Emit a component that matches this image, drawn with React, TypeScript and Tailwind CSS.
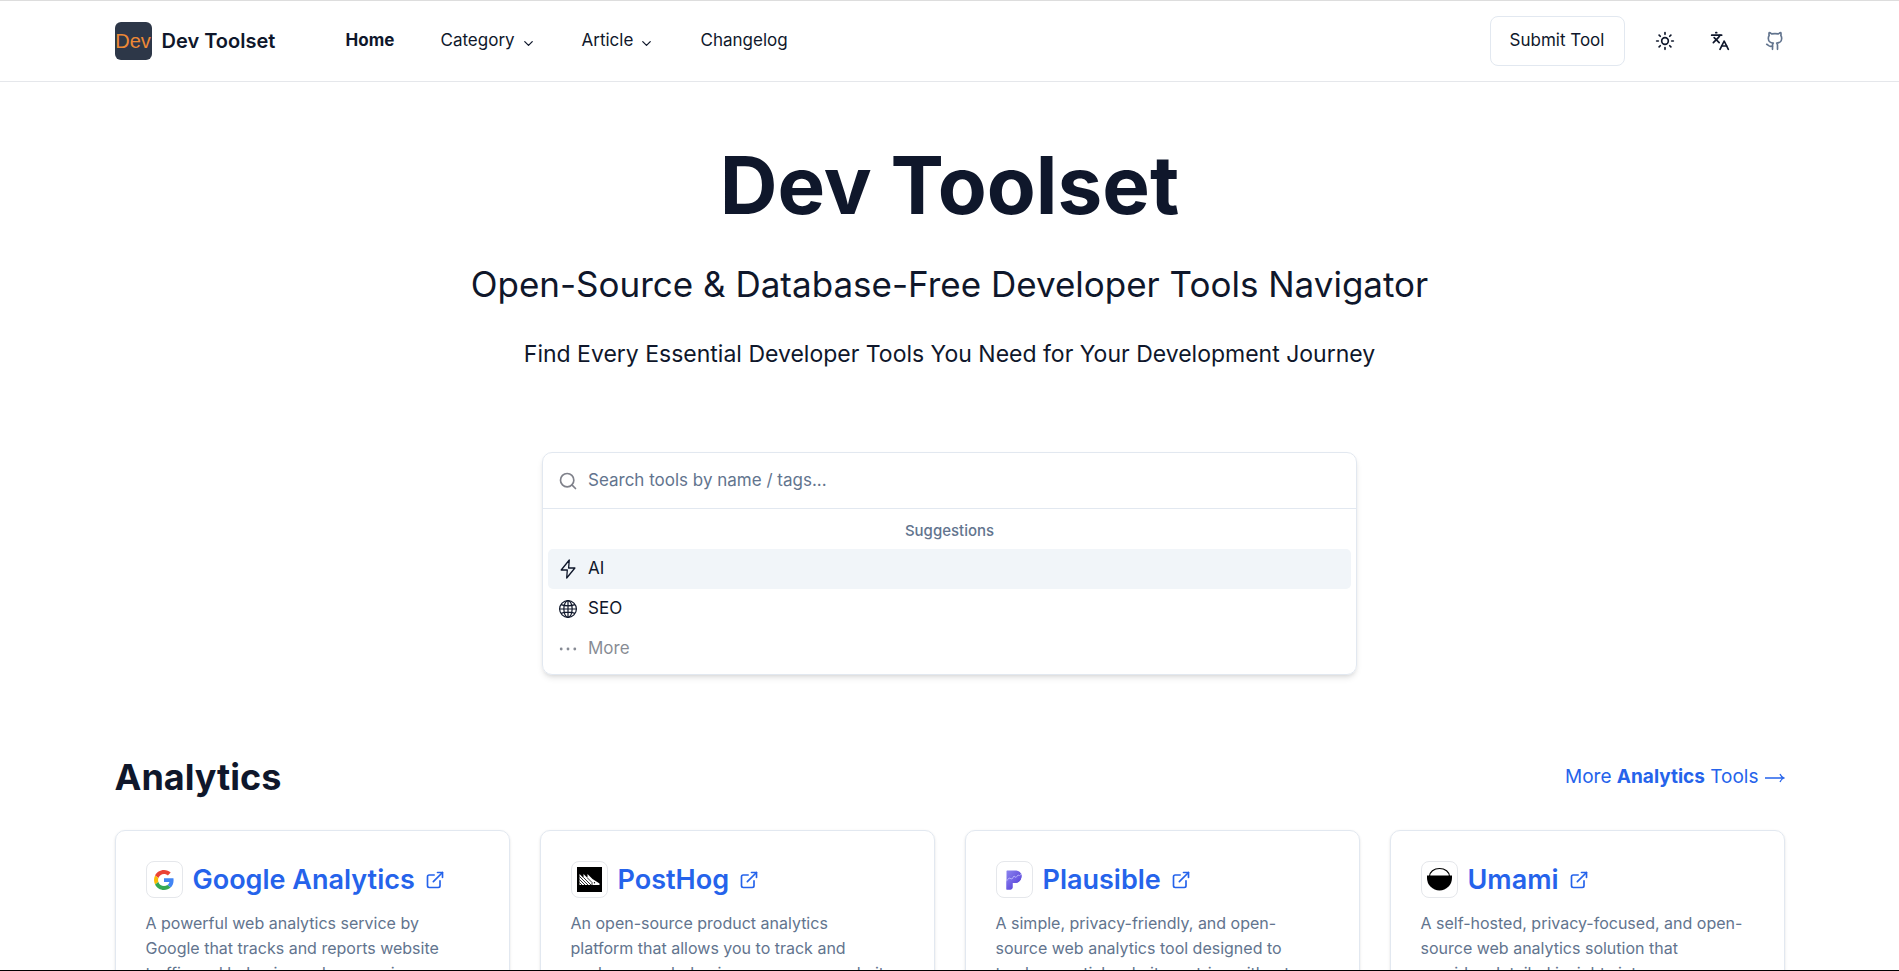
import type { ReactNode } from "react";
import { ChevronDown, ExternalLink, Github, Languages, Search, Sun } from "lucide-react";

const GoogleLogo = () => (
  <svg viewBox="0 0 48 48" className="size-5">
    <path fill="#EA4335" d="M24 9.5c3.54 0 6.71 1.22 9.21 3.6l6.85-6.85C35.9 2.38 30.47 0 24 0 14.62 0 6.51 5.38 2.56 13.22l7.98 6.19C12.43 13.72 17.74 9.5 24 9.5z" />
    <path fill="#4285F4" d="M46.98 24.55c0-1.57-.15-3.09-.38-4.55H24v9.02h12.94c-.58 2.96-2.26 5.48-4.78 7.18l7.73 6c4.51-4.18 7.09-10.36 7.09-17.65z" />
    <path fill="#FBBC05" d="M10.53 28.59c-.48-1.45-.76-2.99-.76-4.59s.27-3.14.76-4.59l-7.98-6.19C.92 16.46 0 20.12 0 24c0 3.88.92 7.54 2.56 10.78l7.97-6.19z" />
    <path fill="#34A853" d="M24 48c6.48 0 11.93-2.13 15.89-5.81l-7.73-6c-2.15 1.45-4.92 2.3-8.16 2.3-6.26 0-11.57-4.22-13.47-9.91l-7.98 6.19C6.51 42.62 14.62 48 24 48z" />
  </svg>
);

const PostHogLogo = () => (
  <svg viewBox="0 0 25 25" className="size-[25px]">
    <rect width="25" height="25" fill="#000" />
    <path fill="#fff" d="M2.500 7 6.500 11V7L10.500 11V7L15.500 12 22.500 16.500V18H2.500z" />
    <path fill="none" stroke="#000" strokeWidth="0.8" d="M2.500 9.500 11 18M2.500 12.500 8 18M2.500 15.500 5 18M6.500 10.500 14 18M10.500 11 15 15.500V18" />
    <circle cx="17.500" cy="15.800" r="0.700" fill="#000" />
  </svg>
);

const PlausibleLogo = () => (
  <svg viewBox="0 0 16 20" className="h-5 w-4">
    <defs>
      <linearGradient id="plausible-top" x1="0" y1="0" x2="1" y2="1">
        <stop offset="0" stopColor="#8b84f0" />
        <stop offset="1" stopColor="#4f36d0" />
      </linearGradient>
      <linearGradient id="plausible-stem" x1="0" y1="0" x2="1" y2="1">
        <stop offset="0" stopColor="#8d83f3" />
        <stop offset="1" stopColor="#4a33d1" />
      </linearGradient>
    </defs>
    <path fill="url(#plausible-top)" d="M1 0.500h9a5.500 5.500 0 0 1 5.500 5.500c0 4-2.500 7-6.500 7H6.500v4.500a2 2 0 0 1-2 2H.5V1z" />
    <path fill="url(#plausible-stem)" d="M.5 11.500 3 8.500l3 1 2-3 2 1.500 2-2.500 1.500.5 2-1.500c.5 5-2.500 8.500-6.500 8.500H6.500v4.500a2 2 0 0 1-2 2H.5z" />
    <path fill="none" stroke="#b9b4fa" strokeWidth="0.9" d="m.5 11 2.500-3 3 1 2-3 2 1.500 2-2.500 1.500.5 2-1.500" />
  </svg>
);

const UmamiLogo = () => (
  <svg viewBox="0 0 25 25" className="size-[25px]">
    <path d="M2.500 9.500a10 8 0 0 1 20 0" fill="none" stroke="#000" strokeWidth="1.200" />
    <path d="M0 8.500h25v2.500a12.500 12.500 0 0 1-25 0z" fill="#000" />
  </svg>
);

const LightningIcon = () => (
  <svg viewBox="0 0 20 20" fill="none" stroke="currentColor" strokeWidth="1.300" strokeLinejoin="round" className="size-5">
    <path d="M11.300 1 10.600 9h6.300L8.700 19l.6-8H3.200z" />
  </svg>
);

const GlobeIcon = () => (
  <svg viewBox="0 0 15 15" fill="none" stroke="currentColor" strokeWidth="0.9" className="size-5">
    <circle cx="7.500" cy="7.500" r="6.300" />
    <ellipse cx="7.500" cy="7.500" rx="3.100" ry="6.300" />
    <path d="M7.500 1.200v12.600M1.200 7.500h12.600M2.200 4.200c3.300 1.100 7.300 1.100 10.600 0M2.200 10.800c3.300-1.100 7.300-1.100 10.600 0" />
  </svg>
);

const DotsIcon = () => (
  <svg viewBox="0 0 20 20" fill="currentColor" className="size-5">
    <circle cx="3.200" cy="10" r="1.400" />
    <circle cx="10" cy="10" r="1.400" />
    <circle cx="16.800" cy="10" r="1.400" />
  </svg>
);

const LongArrow = () => (
  <svg viewBox="0 0 20 10" fill="none" stroke="currentColor" strokeWidth="1.300" className="h-[10px] w-5">
    <path d="M0 5h19M15 1c.8 2 2 3.300 4 4-2 .7-3.200 2-4 4" />
  </svg>
);

const tools: { name: string; logo: ReactNode; description: string[] }[] = [
  {
    name: "Google Analytics",
    logo: <GoogleLogo />,
    description: [
      "A powerful web analytics service by",
      "Google that tracks and reports website",
      "traffic and behavior and conversions.",
    ],
  },
  {
    name: "PostHog",
    logo: <PostHogLogo />,
    description: [
      "An open-source product analytics",
      "platform that allows you to track and",
      "analyze user behavior across your website.",
    ],
  },
  {
    name: "Plausible",
    logo: <PlausibleLogo />,
    description: [
      "A simple, privacy-friendly, and open-",
      "source web analytics tool designed to",
      "track essential website metrics without",
    ],
  },
  {
    name: "Umami",
    logo: <UmamiLogo />,
    description: [
      "A self-hosted, privacy-focused, and open-",
      "source web analytics solution that",
      "provides detailed insights into",
    ],
  },
];

function Header() {
  return (
    <header className="border-b border-gray-200">
      <div className="mx-auto flex h-20 max-w-[1670px] items-center justify-between">
        <div className="flex items-center">
          <a href="#" className="flex items-center gap-[10px]">
            <span className="flex h-[38px] w-[37px] items-center justify-center overflow-hidden rounded-md bg-[#2d3748] font-['Liberation_Sans',sans-serif] text-[20px] leading-5 text-[#ed8936]">
              Dev
            </span>
            <span className="w-[114px] text-[20px] font-semibold whitespace-nowrap">Dev Toolset</span>
          </a>
          <nav className="ml-[70px] flex items-center text-[17px]">
            <a href="#" className="w-[95px] font-bold">Home</a>
            <button className="flex w-[141px] items-center gap-[6px]">
              Category <ChevronDown className="mt-1 size-[15px]" />
            </button>
            <button className="flex w-[119px] items-center gap-[6px]">
              Article <ChevronDown className="mt-1 size-[15px]" />
            </button>
            <a href="#">Changelog</a>
          </nav>
        </div>
        <div className="flex items-center">
          <button className="h-[50px] w-[135px] rounded-lg border border-slate-200 text-[17px]">
            Submit Tool
          </button>
          <button aria-label="Toggle theme" className="ml-[30px]"><Sun className="size-5" /></button>
          <button aria-label="Change language" className="ml-[35px]"><Languages className="size-5" /></button>
          <a href="#" aria-label="GitHub" className="ml-[35px] text-slate-500"><Github className="size-5" /></a>
        </div>
      </div>
    </header>
  );
}

function SearchBox() {
  return (
    <div className="mx-auto mt-20 w-full max-w-[815px] rounded-[10px] border border-slate-200 text-[17px] shadow-md">
      <label className="flex h-14 items-center gap-[10px] border-b border-slate-200 px-[15px]">
        <Search className="size-5 text-slate-950 opacity-50" />
        <input
          type="text"
          aria-label="Search tools"
          placeholder="Search tools by name / tags..."
          className="flex-1 outline-none placeholder:text-slate-500"
        />
      </label>
      <div className="p-[5px]">
        <p className="flex h-[35px] items-center justify-center text-[15px] font-medium text-slate-500">Suggestions</p>
        <button className="flex h-10 w-full items-center gap-[10px] rounded-[5px] bg-slate-100 px-[10px]">
          <LightningIcon /> AI
        </button>
        <button className="flex h-10 w-full items-center gap-[10px] px-[10px]">
          <GlobeIcon /> SEO
        </button>
        <button className="flex h-10 w-full items-center gap-[10px] px-[10px] opacity-50">
          <DotsIcon /> More
        </button>
      </div>
    </div>
  );
}

export default function App() {
  return (
    <div className="h-screen overflow-hidden border-t border-b border-t-[#dddddd] border-b-black bg-white font-['Inter',sans-serif] text-slate-900">
      <Header />
      <main className="mx-auto max-w-[1670px]">
        <section className="pt-[58px] text-center">
          <h1 className="text-[80px] leading-[90px] font-bold">Dev Toolset</h1>
          <h2 className="mt-8 text-[35px] leading-[45px]">Open-Source &amp; Database-Free Developer Tools Navigator</h2>
          <p className="mt-[30px] text-[23px] leading-[35px]">
            Find Every Essential Developer Tools You Need for Your Development Journey
          </p>
          <SearchBox />
        </section>

        <section className="mt-20">
          <div className="flex items-center justify-between">
            <h2 className="text-[36px] leading-[45px] font-bold">Analytics</h2>
            <a href="#" className="flex items-center gap-[6px] text-[19px] text-[#2563eb]">
              <span>More <b>Analytics</b> Tools</span>
              <LongArrow />
            </a>
          </div>
          <div className="mt-[30px] grid grid-cols-4 gap-[30px]">
            {tools.map((tool) => (
              <article key={tool.name} className="rounded-[10px] border border-slate-200 p-[30px] shadow-sm">
                <a href="#" className="flex items-center gap-[10px] text-[#2563eb]">
                  <span className="flex size-[37px] items-center justify-center rounded-lg border border-gray-200">
                    {tool.logo}
                  </span>
                  <h3 className="text-[27px] leading-[37px] font-semibold">{tool.name}</h3>
                  <ExternalLink className="size-5" />
                </a>
                <p className="mt-[13px] text-[16px] leading-[25px] whitespace-nowrap text-slate-500">
                  {tool.description.map((line) => (
                    <span key={line} className="block">{line}</span>
                  ))}
                </p>
              </article>
            ))}
          </div>
        </section>
      </main>
    </div>
  );
}
